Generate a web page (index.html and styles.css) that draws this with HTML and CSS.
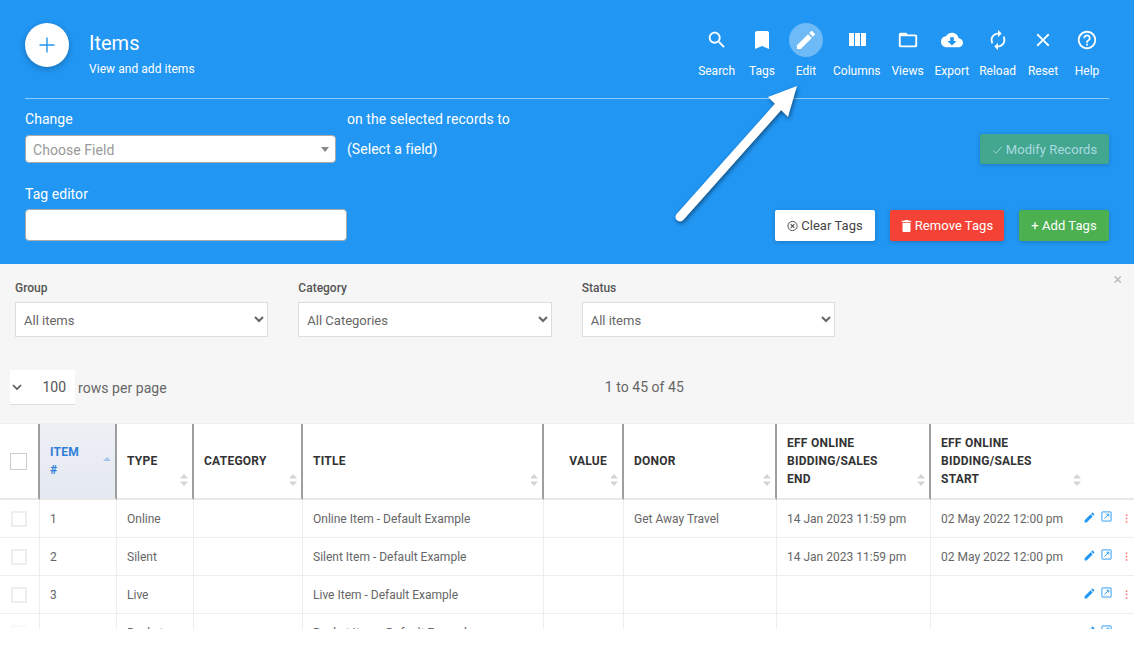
FILE: index.html
```html
<!DOCTYPE html>
<html lang="en">
<head>
  <meta charset="UTF-8" />
  <title>Items</title>
  <link rel="stylesheet" href="styles.css">
</head>
<body>
  <!-- Shared row icons -->
  <svg class="defs" width="0" height="0">
    <symbol id="i-edit" viewBox="0 0 24 24"><path d="M3 17.25V21h3.75L17.81 9.94l-3.75-3.75L3 17.25zM20.71 7.04c.39-.39.39-1.02 0-1.41l-2.34-2.34c-.39-.39-1.02-.39-1.41 0l-1.83 1.83 3.75 3.75 1.83-1.83z"/></symbol>
    <symbol id="i-open" viewBox="0 0 12 12"><path d="M1.500 1h9a.5.5 0 0 1 .5.5v9a.5.5 0 0 1-.5.5h-9a.5.5 0 0 1-.5-.5v-9a.5.5 0 0 1 .5-.5zM3.800 8.200L8 4M6 3.500H8.500V6" fill="none" stroke="currentColor" stroke-width="1"/></symbol>
    <symbol id="i-more" viewBox="0 0 4 12"><circle cx="2" cy="1.500" r="1.200"/><circle cx="2" cy="6" r="1.200"/><circle cx="2" cy="10.500" r="1.200"/></symbol>
    <symbol id="i-sort" viewBox="0 0 8 12"><path d="M4 0l4 4.500H0zM4 12L0 7.500h8z"/></symbol>
  </svg>

  <!-- Blue page header -->
  <header class="page-head">
    <div class="top-row">
      <div class="title-group">
        <button class="fab"><svg viewBox="0 0 24 24"><path d="M19.500 12.700h-6.800v6.800h-1.400v-6.800H4.500v-1.400h6.800V4.500h1.400v6.800h6.800z"/></svg></button>
        <div class="title-text">
          <h1>Items</h1>
          <p>View and add items</p>
        </div>
      </div>
      <nav class="toolbar">
        <a class="tool"><span class="tool-icon small"><svg viewBox="0 0 24 24"><path d="M15.5 14h-.79l-.28-.27C15.41 12.59 16 11.11 16 9.500 16 5.910 13.090 3 9.500 3S3 5.910 3 9.500 5.910 16 9.500 16c1.610 0 3.090-.59 4.230-1.570l.27.28v.79l5 4.990L20.490 19l-4.990-5zm-6 0C7.010 14 5 11.990 5 9.500S7.010 5 9.500 5 14 7.010 14 9.500 11.990 14 9.500 14z"/></svg></span>Search</a>
        <a class="tool"><span class="tool-icon"><svg viewBox="0 0 24 24"><path d="M17 3H7c-1.100 0-1.990.9-1.990 2L5 21l7-3 7 3V5c0-1.100-.9-2-2-2z"/></svg></span>Tags</a>
        <a class="tool active"><span class="tool-icon"><svg viewBox="0 0 24 24"><path d="M3 17.250V21h3.750L17.810 9.940l-3.750-3.750L3 17.250zM20.710 7.040c.39-.39.39-1.020 0-1.410l-2.340-2.340c-.39-.39-1.020-.39-1.410 0l-1.830 1.830 3.750 3.750 1.830-1.830z"/></svg></span>Edit</a>
        <a class="tool"><span class="tool-icon"><svg viewBox="0 0 24 24"><path d="M10 18h5V5h-5v13zm-6 0h5V5H4v13zM16 5v13h5V5h-5z"/></svg></span>Columns</a>
        <a class="tool"><span class="tool-icon small"><svg viewBox="0 0 24 24"><path d="M20 6h-8l-2-2H4c-1.100 0-1.990.9-1.990 2L2 18c0 1.100.9 2 2 2h16c1.100 0 2-.9 2-2V8c0-1.100-.9-2-2-2zm0 12H4V8h16v10z"/></svg></span>Views</a>
        <a class="tool"><span class="tool-icon small"><svg viewBox="0 0 24 24"><path d="M19.350 10.040C18.670 6.590 15.640 4 12 4 9.110 4 6.600 5.640 5.350 8.040 2.340 8.360 0 10.910 0 14c0 3.310 2.690 6 6 6h13c2.760 0 5-2.240 5-5 0-2.640-2.050-4.780-4.650-4.960zM17 13l-5 5-5-5h3V9h4v4h3z"/></svg></span>Export</a>
        <a class="tool"><span class="tool-icon small"><svg viewBox="0 0 24 24"><path transform="matrix(-1 0 0 1 24 0)" d="M12 4V1L8 5l4 4V6c3.310 0 6 2.690 6 6 0 1.010-.25 1.970-.7 2.800l1.460 1.460C19.540 15.030 20 13.570 20 12c0-4.420-3.580-8-8-8zm0 14c-3.310 0-6-2.690-6-6 0-1.010.25-1.970.7-2.800L5.240 7.740C4.460 8.970 4 10.430 4 12c0 4.420 3.580 8 8 8v3l4-4-4-4v3z"/></svg></span>Reload</a>
        <a class="tool"><span class="tool-icon small"><svg viewBox="0 0 24 24"><path d="M19 6.410L17.590 5 12 10.590 6.410 5 5 6.410 10.590 12 5 17.590 6.410 19 12 13.410 17.590 19 19 17.590 13.410 12z"/></svg></span>Reset</a>
        <a class="tool"><span class="tool-icon small"><svg viewBox="0 0 24 24"><path d="M11 18h2v-2h-2v2zm1-16C6.480 2 2 6.480 2 12s4.480 10 10 10 10-4.480 10-10S17.520 2 12 2zm0 18c-4.410 0-8-3.590-8-8s3.590-8 8-8 8 3.590 8 8-3.590 8-8 8zm0-14c-2.210 0-4 1.790-4 4h2c0-1.100.9-2 2-2s2 .9 2 2c0 2-3 1.750-3 5h2c0-2.250 3-2.500 3-5 0-2.210-1.790-4-4-4z"/></svg></span>Help</a>
      </nav>
    </div>

    <div class="change-row">
      <div class="change-field">
        <label>Change</label>
        <div class="field-select">Choose Field<span class="caret"></span></div>
      </div>
      <div class="change-note">
        <span>on the selected records to</span>
        <span>(Select a field)</span>
      </div>
      <button class="btn btn-modify"><svg viewBox="0 0 12 12"><path d="M1.500 6.500l3 3 6-7" fill="none" stroke="currentColor" stroke-width="1"/></svg>Modify Records</button>
    </div>

    <div class="tag-row">
      <div class="tag-field">
        <label>Tag editor</label>
        <input class="tag-input" type="text">
      </div>
      <div class="tag-buttons">
        <button class="btn btn-clear"><svg viewBox="0 0 12 12"><circle cx="6" cy="6" r="5" fill="none" stroke="currentColor"/><path d="M4 4l4 4M8 4l-4 4" stroke="currentColor" stroke-width="1.100"/></svg>Clear Tags</button>
        <button class="btn btn-remove"><svg viewBox="5 3 14 18"><path fill="currentColor" d="M6 19c0 1.100.9 2 2 2h8c1.100 0 2-.9 2-2V7H6v12zM19 4h-3.500l-1-1h-5l-1 1H5v2h14V4z"/></svg>Remove Tags</button>
        <button class="btn btn-add">+ Add Tags</button>
      </div>
    </div>
  </header>

  <!-- Filters and paging -->
  <section class="filter-panel">
    <span class="panel-close">&times;</span>
    <div class="filters">
      <div class="filter">
        <label>Group</label>
        <select><option>All items</option></select>
      </div>
      <div class="filter">
        <label>Category</label>
        <select><option>All Categories</option></select>
      </div>
      <div class="filter">
        <label>Status</label>
        <select><option>All items</option></select>
      </div>
    </div>
    <div class="paging">
      <div class="page-size"><svg viewBox="0 0 12 12"><path d="M2 4l4 4 4-4" fill="none" stroke="currentColor" stroke-width="1.600"/></svg><span>100</span></div>
      <span class="rows-label">rows per page</span>
      <span class="page-count">1 to 45 of 45</span>
    </div>
  </section>

  <!-- Items table -->
  <div class="table-wrap">
    <table class="items">
      <colgroup>
        <col class="c-check"><col class="c-item"><col class="c-type"><col class="c-cat"><col class="c-title"><col class="c-value"><col class="c-donor"><col class="c-end"><col class="c-start"><col class="c-actions">
      </colgroup>
      <thead>
        <tr>
          <th><span class="head-check"></span></th>
          <th class="sorted">ITEM #<span class="sort-up"></span></th>
          <th>TYPE<svg class="sort"><use href="#i-sort"/></svg></th>
          <th>CATEGORY<svg class="sort"><use href="#i-sort"/></svg></th>
          <th>TITLE<svg class="sort"><use href="#i-sort"/></svg></th>
          <th class="num">VALUE<svg class="sort"><use href="#i-sort"/></svg></th>
          <th>DONOR<svg class="sort"><use href="#i-sort"/></svg></th>
          <th>EFF ONLINE BIDDING/SALES END<svg class="sort"><use href="#i-sort"/></svg></th>
          <th class="last">EFF ONLINE BIDDING/SALES START<svg class="sort"><use href="#i-sort"/></svg></th>
          <th class="last"></th>
        </tr>
      </thead>
      <tbody>
        <tr>
          <td><span class="row-check"></span></td><td>1</td><td>Online</td><td></td><td>Online Item - Default Example</td><td></td><td>Get Away Travel</td><td>14 Jan 2023 11:59 pm</td><td class="last">02 May 2022 12:00 pm</td>
          <td class="actions last"><svg class="a-edit"><use href="#i-edit"/></svg><svg class="a-open"><use href="#i-open"/></svg><svg class="a-more"><use href="#i-more"/></svg></td>
        </tr>
        <tr>
          <td><span class="row-check"></span></td><td>2</td><td>Silent</td><td></td><td>Silent Item - Default Example</td><td></td><td></td><td>14 Jan 2023 11:59 pm</td><td class="last">02 May 2022 12:00 pm</td>
          <td class="actions last"><svg class="a-edit"><use href="#i-edit"/></svg><svg class="a-open"><use href="#i-open"/></svg><svg class="a-more"><use href="#i-more"/></svg></td>
        </tr>
        <tr>
          <td><span class="row-check"></span></td><td>3</td><td>Live</td><td></td><td>Live Item - Default Example</td><td></td><td></td><td></td><td class="last"></td>
          <td class="actions last"><svg class="a-edit"><use href="#i-edit"/></svg><svg class="a-open"><use href="#i-open"/></svg><svg class="a-more"><use href="#i-more"/></svg></td>
        </tr>
        <tr>
          <td><span class="row-check faded"></span></td><td></td><td>Bucket</td><td></td><td>Bucket Item - Default Example</td><td></td><td></td><td></td><td class="last"></td>
          <td class="actions last"><svg class="a-edit"><use href="#i-edit"/></svg><svg class="a-open"><use href="#i-open"/></svg></td>
        </tr>
      </tbody>
    </table>
  </div>

  <!-- Callout arrow pointing at the Edit tool -->
  <svg class="callout" width="140" height="150" viewBox="0 0 140 150">
    <path d="M7 135L105 25" fill="none" stroke="#fff" stroke-width="9" stroke-linecap="round"/>
    <path d="M124 4L95 15 115 35z" fill="#fff"/>
  </svg>
</body>
</html>
```

FILE: styles.css
```css
/* Global styles */
* {
  box-sizing: border-box;
}
body {
  margin: 0;
  background: #fff;
  color: #666;
  font-family: Roboto, Arial, sans-serif;
  font-size: 14px;
  overflow: hidden;
  height: 655px;
  position: relative;
}
.defs {
  position: absolute;
}
/* Blue header */
.page-head {
  background: #2196f3;
  color: #fff;
  padding: 23px 25px 23px;
}
.top-row {
  display: flex;
  justify-content: space-between;
  height: 76px;
  border-bottom: 1px solid rgba(255,255,255,0.5);
}
.title-group {
  display: flex;
  gap: 20px;
}
.fab {
  width: 44px;
  height: 44px;
  padding: 10px;
  border: none;
  border-radius: 50%;
  background: #fff;
  box-shadow: 0 2px 6px rgba(0,0,0,0.25);
}
.fab svg {
  display: block;
  fill: #2196f3;
}
.title-text h1 {
  margin: 7px 0 0;
  font-size: 20px;
  font-weight: 400;
  line-height: 26px;
}
.title-text p {
  margin: 5px 0 0;
  font-size: 12px;
  line-height: 16px;
  letter-spacing: 0.05px;
}
/* Toolbar */
.toolbar {
  display: flex;
}
.tool {
  display: flex;
  flex-direction: column;
  align-items: center;
  min-width: 44px;
  padding: 0 5px;
  font-size: 12px;
  line-height: 16px;
}
.tool-icon {
  width: 34px;
  height: 34px;
  padding: 5px;
  margin-bottom: 6px;
  border-radius: 50%;
}
.tool-icon.small {
  padding: 6px;
}
.tool-icon svg {
  display: block;
  fill: #fff;
}
.tool.active .tool-icon {
  background: rgba(255,255,255,0.35);
}
/* Change records form */
.change-row {
  display: flex;
  align-items: flex-end;
  margin-top: 10px;
}
.change-field {
  width: 311px;
  margin-right: 11px;
}
.change-field label,
.tag-field label {
  display: block;
  line-height: 20px;
  letter-spacing: 0.05px;
}
.field-select {
  position: relative;
  height: 28px;
  margin-top: 6px;
  padding-left: 7px;
  background: #fff;
  border: 1px solid #aaa;
  border-radius: 4px;
  color: #999;
  line-height: 28px;
  letter-spacing: 0.05px;
}
.caret {
  position: absolute;
  right: 6px;
  top: 11px;
  border-left: 4px solid transparent;
  border-right: 4px solid transparent;
  border-top: 5px solid #888;
}
.change-note {
  display: flex;
  flex-direction: column;
  gap: 10px;
  line-height: 20px;
  letter-spacing: 0.05px;
}
.change-note span:last-child {
  margin-bottom: 4px;
}
.btn {
  height: 31px;
  padding: 0;
  border: none;
  border-radius: 2px;
  font-family: inherit;
  font-size: 13px;
  letter-spacing: 0.05px;
  box-shadow: 0 1px 4px rgba(0,0,0,0.2);
}
.btn svg {
  width: 11px;
  height: 12px;
  margin-right: 3px;
  vertical-align: -2px;
}
.btn-modify {
  width: 129px;
  height: 30px;
  margin-left: auto;
  margin-bottom: -1px;
  background: #43a78f;
  color: #a9d9e0;
}
.tag-row {
  display: flex;
  align-items: flex-end;
  margin-top: 21px;
}
.tag-field {
  width: 322px;
}
.tag-input {
  display: block;
  width: 100%;
  height: 32px;
  margin-top: 5px;
  background: #fff;
  border: 1px solid #aaa;
  border-radius: 4px;
}
.tag-buttons {
  display: flex;
  gap: 15px;
  margin-left: auto;
}
.btn-clear {
  width: 100px;
  background: #fff;
  color: #444;
}
.btn-remove {
  width: 114px;
  background: #f44336;
  color: #fff;
}
.btn-add {
  width: 90px;
  background: #4caf50;
  color: #fff;
}
/* Filter panel */
.filter-panel {
  position: relative;
  height: 159px;
  padding: 16px 0 0 15px;
  background: #f6f6f6;
}
.panel-close {
  position: absolute;
  right: 12px;
  top: 7px;
  color: #bbb;
  font-size: 16px;
  line-height: 18px;
}
.filters {
  display: flex;
  gap: 30px;
}
.filter {
  width: 253.330px;
}
.filter label {
  display: block;
  font-size: 12px;
  font-weight: 500;
  line-height: 16px;
  color: #555;
}
.filter select {
  display: block;
  width: 100%;
  height: 35px;
  margin-top: 6px;
  padding: 2px 0 0 4px;
  background: #fff;
  border: 1px solid #ddd;
  border-radius: 0;
  font-family: inherit;
  font-size: 13px;
  color: #666;
}
.paging {
  display: flex;
  align-items: center;
  margin: 33px 0 0 -5px;
}
.page-size {
  display: flex;
  align-items: center;
  justify-content: space-between;
  width: 65px;
  height: 35px;
  padding: 0 9px 0 1px;
  background: #fff;
  border-bottom: 1px solid #ddd;
  color: #555;
}
.page-size svg {
  width: 12px;
  height: 12px;
}
.rows-label {
  margin-left: 3px;
  letter-spacing: 0.05px;
}
.page-count {
  margin-left: 438px;
  margin-top: -2px;
  font-size: 14px;
  letter-spacing: 0.05px;
}
/* Items table */
.table-wrap {
  height: 206px;
  overflow: hidden;
  border-top: 1px solid #eee;
}
.items {
  width: 1134px;
  table-layout: fixed;
  border-collapse: separate;
  border-spacing: 0;
}
.c-check { width: 40px; }
.c-item { width: 77px; }
.c-type { width: 77px; }
.c-cat { width: 109px; }
.c-title { width: 241px; }
.c-value { width: 80px; }
.c-donor { width: 153px; }
.c-end { width: 154px; }
.c-start { width: 154px; }
.c-actions { width: 49px; }
.items th {
  position: relative;
  height: 76px;
  padding: 0 30px 0 10px;
  border-right: 2px solid #9e9e9e;
  border-bottom: 2px solid #e8e8e8;
  color: #333;
  font-size: 12px;
  font-weight: 700;
  line-height: 18px;
  text-align: left;
  letter-spacing: 0.25px;
}
.items th:first-child {
  padding: 0 0 0 9px;
}
.items th.sorted {
  background: linear-gradient(#eef0f6, #e4e8f0);
  color: #2f80d8;
}
.items th.num {
  text-align: right;
  padding-right: 15px;
}
.items th.last,
.items td.last {
  border-right: none;
}
.head-check {
  display: block;
  width: 17px;
  height: 17px;
  margin-left: 1px;
  background: #fff;
  border: 1px solid #ccc;
}
.sort {
  position: absolute;
  right: 4px;
  bottom: 12px;
  width: 8px;
  height: 12px;
  fill: #d4d4d4;
}
.sort-up {
  position: absolute;
  right: 4px;
  top: 33px;
  border-left: 4px solid transparent;
  border-right: 4px solid transparent;
  border-bottom: 4px solid #a3c4ec;
}
.items td {
  height: 38px;
  padding: 0 0 0 10px;
  border-right: 1px solid #eee;
  border-bottom: 1px solid #eee;
  font-size: 12px;
  white-space: nowrap;
}
.row-check {
  display: block;
  width: 16px;
  height: 16px;
  margin-left: 1px;
  border: 2px solid #eee;
}
.row-check.faded {
  border-color: #fafafa;
}
.actions {
  position: relative;
}
.actions svg {
  position: absolute;
  top: 11px;
}
.a-edit {
  left: -2px;
  width: 13px;
  height: 13px;
  fill: #2196f3;
}
.a-open {
  left: 16px;
  width: 11px;
  height: 11px;
  color: #2196f3;
}
.actions .a-more {
  left: 40px;
  top: 13px;
  width: 3px;
  height: 11px;
  fill: #f77;
}
/* Callout arrow */
.callout {
  position: absolute;
  left: 673px;
  top: 82px;
  filter: drop-shadow(1px 2px 2px rgba(0,0,0,0.45));
}
```
